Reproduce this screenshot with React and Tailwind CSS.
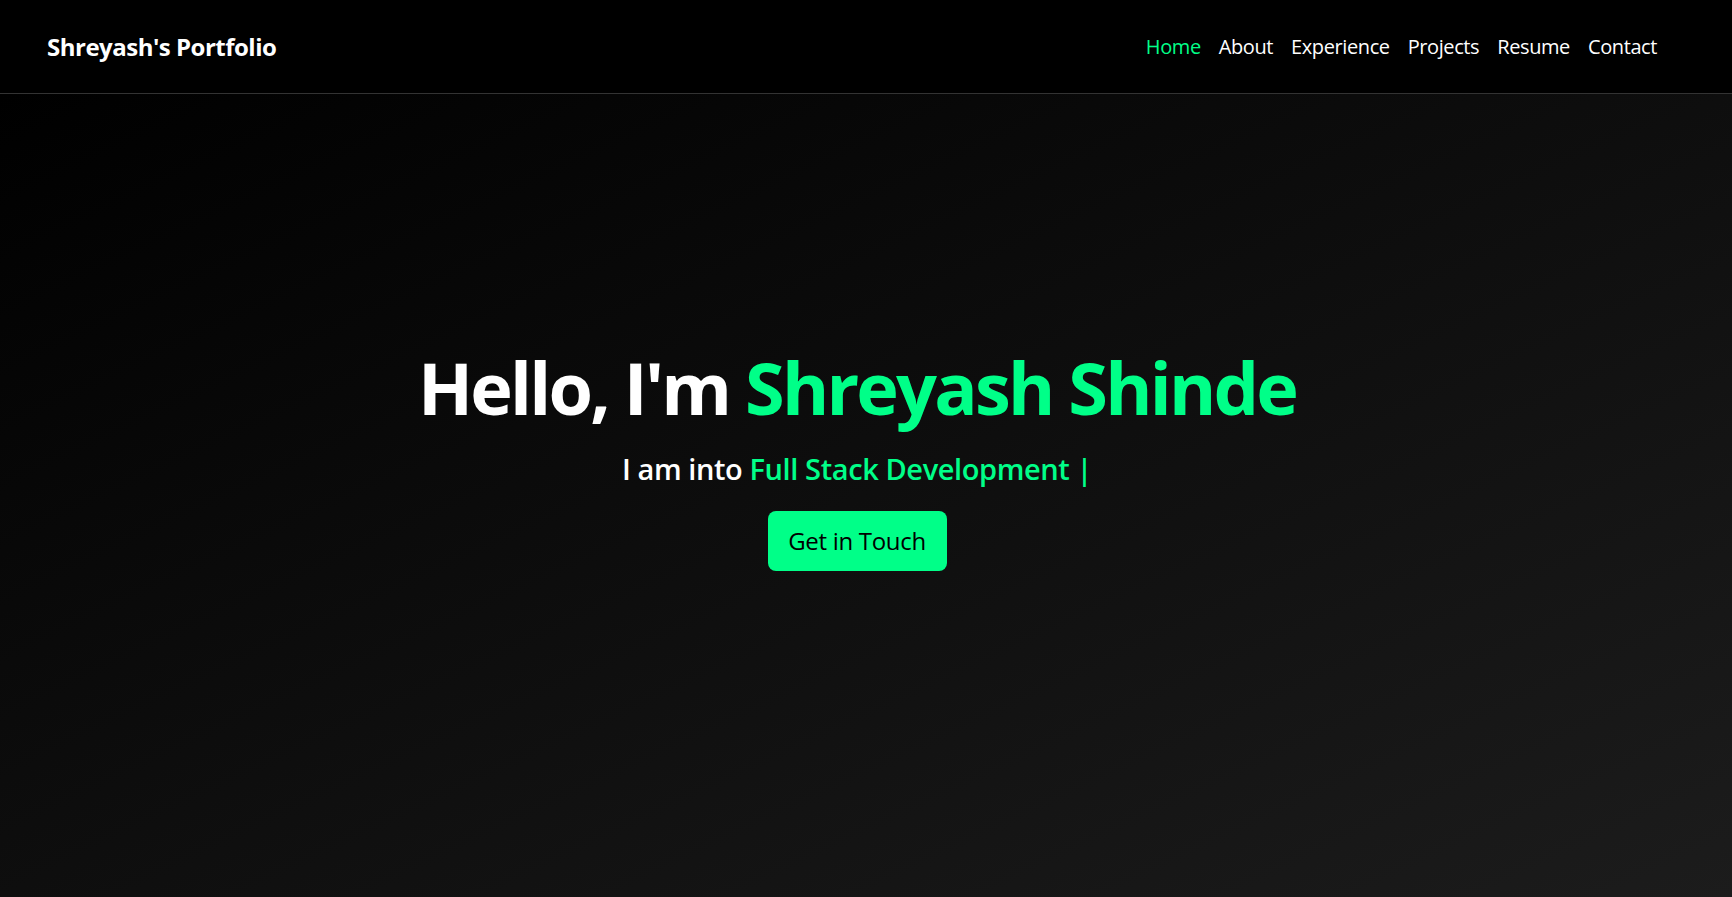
import React from 'react';

const navLinks = ['Home', 'About', 'Experience', 'Projects', 'Resume', 'Contact'];

const App = () => {
  return (
    <div className="min-h-screen bg-black font-['Open_Sans',sans-serif] text-white">
      {/* Navbar */}
      <header className="flex h-[94px] items-center justify-between border-b border-[#333333] bg-black pl-[47px] pr-[75px]">
        <h1 className="text-[24px] font-bold tracking-[-0.5px]">Shreyash's Portfolio</h1>
        <nav className="flex items-center gap-[18px] text-[20px] tracking-[-0.4px]">
          {navLinks.map((link, i) => (
            <a key={link} href={`#${link.toLowerCase()}`} className={i === 0 ? 'text-[#00ff88]' : 'text-white'}>
              {link}
            </a>
          ))}
        </nav>
      </header>

      {/* Hero */}
      <section
        id="home"
        className="flex h-[803px] flex-col items-center bg-[linear-gradient(to_bottom_right,#000000,#1c1c1c)] pr-[18px] pt-[250px]"
      >
        <h2 className="text-[72px] font-bold leading-[1.2] tracking-[-2.8px]">
          Hello, I'm <span className="text-[#00ff88]">Shreyash Shinde</span>
        </h2>
        <p className="mt-[20px] text-[29px] font-semibold leading-[1.3] tracking-[-0.4px]">
          <span>I am into </span>
          <span className="text-[#00ff88]">Full Stack Development |</span>
        </p>
        <button className="mt-[23px] h-[60px] w-[179px] rounded-[8px] bg-[#00ff88] text-[24px] tracking-[-0.3px] text-black">
          Get in Touch
        </button>
      </section>
    </div>
  );
};

export default App;
